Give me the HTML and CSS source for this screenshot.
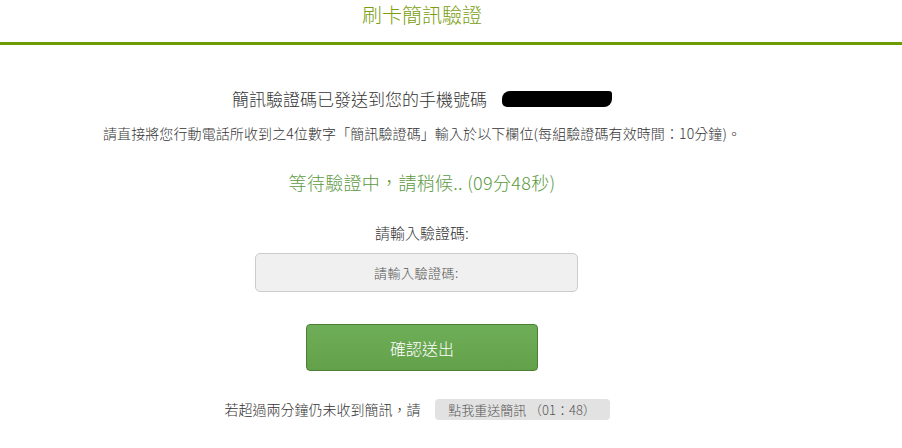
FILE: index.html
```html
<!DOCTYPE html>
<html lang="zh-Hant">
<head>
<meta charset="utf-8">
<title>刷卡簡訊驗證</title>
<link rel="stylesheet" href="styles.css">
</head>
<body>
<header class="header">
  <div class="header-inner">
    <h1 class="title">刷卡簡訊驗證</h1>
  </div>
</header>
<main class="page">
  <p class="sent">簡訊驗證碼已發送到您的手機號碼<span class="redact"></span></p>
  <p class="hint">請直接將您行動電話所收到之4位數字「簡訊驗證碼」輸入於以下欄位(每組驗證碼有效時間：10分鐘)。</p>
  <p class="wait">等待驗證中，請稍候.. (09分48秒)</p>
  <label class="label" for="code">請輸入驗證碼:</label>
  <input class="code" id="code" type="text" placeholder="請輸入驗證碼:">
  <button class="submit" type="button">確認送出</button>
  <div class="resend">
    <span class="resend-text">若超過兩分鐘仍未收到簡訊，請</span>
    <button class="resend-btn" type="button">點我重送簡訊 （01：48）</button>
  </div>
</main>
</body>
</html>
```

FILE: styles.css
```css
html, body {
  margin: 0;
  padding: 0;
  background: #ffffff;
}
body {
  font-family: "Noto Sans CJK TC", "Liberation Sans", sans-serif;
  font-weight: 300;
  color: #333333;
}
.header {
  height: 42px;
  border-bottom: 3px solid #6c9c00;
}
.header-inner {
  width: 844px;
  display: flex;
  justify-content: center;
}
.title {
  margin: 0;
  font-size: 20px;
  font-weight: 300;
  line-height: 30px;
  color: #7a9e10;
}
.page {
  width: 844px;
  display: flex;
  flex-direction: column;
  align-items: center;
  padding-top: 42px;
}
.sent {
  margin: 0;
  font-size: 17px;
  line-height: 24px;
  color: #333;
  display: flex;
  align-items: center;
}
.redact {
  display: inline-block;
  width: 110px;
  height: 16px;
  margin-left: 15px;
  background: #000;
  border-radius: 8px 3px 8px 5px;
}
.hint {
  margin: 12px 0 0;
  font-size: 14px;
  line-height: 20px;
  letter-spacing: 0.1px;
  color: #333;
}
.wait {
  margin: 26px 0 0;
  font-size: 18px;
  line-height: 26px;
  letter-spacing: 0.3px;
  color: #5c9a42;
}
.label {
  margin-top: 28px;
  font-size: 15px;
  line-height: 20px;
  color: #333;
}
.code {
  box-sizing: border-box;
  margin: 10px 11px 0 0;
  width: 323px;
  height: 39px;
  background: #f0f0f0;
  border: 1px solid #cccccc;
  border-radius: 5px;
  text-align: center;
  font-family: inherit;
  font-weight: 300;
  font-size: 13px;
  letter-spacing: 0.5px;
  outline: none;
}
.code::placeholder {
  color: #555;
}
.submit {
  box-sizing: border-box;
  margin-top: 32px;
  width: 232px;
  height: 47px;
  background: linear-gradient(#6fae58, #63a04a);
  border: 1px solid #4c7f33;
  border-radius: 4px;
  color: #fff;
  font-family: inherit;
  font-weight: 300;
  font-size: 16px;
}
.resend {
  margin: 28px 10px 0 0;
  display: flex;
  align-items: center;
  gap: 14px;
}
.resend-text {
  font-size: 14px;
  line-height: 21px;
  color: #333;
}
.resend-btn {
  box-sizing: border-box;
  width: 175px;
  height: 21px;
  padding: 0;
  background: #e2e2e2;
  border: none;
  border-radius: 4px;
  color: #555;
  font-family: inherit;
  font-weight: 300;
  font-size: 13px;
  line-height: 21px;
}
```
